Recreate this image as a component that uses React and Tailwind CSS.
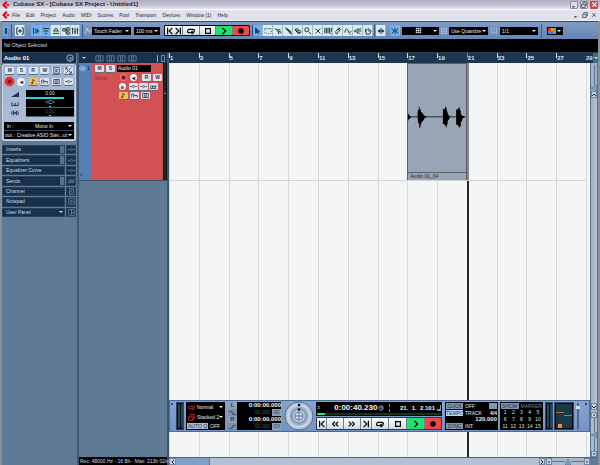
import clsx from 'clsx';

const MENUS = ['File', 'Edit', 'Project', 'Audio', 'MIDI', 'Scores', 'Pool', 'Transport', 'Devices', 'Window (1)', 'Help'];
const BARS = [1, 3, 5, 7, 9, 11, 13, 15, 17, 19, 21, 23, 25, 27];

// stroke icons, all on a 10x10 grid
const ICONS = {
  constrain: 'M3 1H1v8h2M7 1h2v8H7M3.5 5a1.5 1.5 0 1 0 3 0a1.5 1.5 0 1 0-3 0M5 4v2',
  inspector: 'M2 1v8M4 3h2M4 7h2M4 5h5M7 3v4',
  info: 'M1 2h8M2 5h6M4 8h2',
  overview: 'M1 8h8M2 6l2-4h2l2 4M3 5h4',
  pool: 'M1 2h3v3H1zM6 1h3v3H6zM6 6h3v3H6zM4 3h2M5 3v5h1',
  mixer: 'M2 1v8M5 1v8M8 1v8M1 3h2M4 6h2M7 4h2',
  auto: 'M1 9l3-6l3 4l2-4M3 2h2v2H3z',
  prev: 'M2 1v8M8 1L4 5l4 4',
  next: 'M8 1v8M2 1l4 4l-4 4',
  rewind: 'M5 2L2 5l3 3M9 2L6 5l3 3',
  forward: 'M1 2l3 3l-3 3M5 2l3 3l-3 3',
  cycle: 'M4 7H2.5Q0 7 1 4.500T4 3h3q3 0 2 2.500T7 7H6M7 5L5 7l2 2',
  stop: 'M2 2h6v6H2z',
  play: 'M3 1l4 4l-4 4',
  arrow: 'M2 1v7l2-2l2 3M2 1l5 5H4M3 3v4M4 4v2',
  range: 'M1 2h1M3 2h1M5 2h1M7 2h1M9 2v1M9 5v1M9 8H8M6 8H5M3 8H2M1 7V6M1 4V3',
  split: 'M1 2l5 3l3 3M4 4l4-1M5 5l1 4M7 6h2',
  glue: 'M2 1l4 5l3 3l-1-4zM4 3l4 3',
  erase: 'M1 3l3-1l5 4l-2 2H5zM2 4l4 1M4 6l4 1',
  zoom: 'M1 3.500a2.500 2.500 0 1 0 5 0a2.500 2.500 0 1 0-5 0M6 6l3 3',
  mute: 'M2 2l6 6M8 2L2 8',
  warp: 'M1 1v7M3 1v7M5 1v7M7 1v7M9 1v5M8 8h1v1',
  draw: 'M3 9l-1-3l4-5l2 2l-4 5zM5 3l2 1',
  line: 'M1 7q1-6 3-4t2 4t3-2M8 9h1',
  play2: 'M1 4h2l2-2v6L3 6H1zM6 3l3-1M6 5h3M6 7l2 2',
  color: 'M2 5l3-3l4 3l-2 4H3zM2 2v4M5 5h2',
  scroll: 'M5 1v8M1 5h8M3 3v4M7 3v4M2 4v2M8 4v2',
  snap: 'M5 1v8M1 2l3 3l-3 3M9 2L6 5l3 3',
  grid: 'M1 2h8M1 5h8M1 8h8M2 1v8M5 1v8M8 1v8',
  quantize: 'M2 1v8M8 1v8M5 5v4M3 7h4M4 2h2',
  lanes: 'M1 2h8v6H1zM4 2v6M6 2v6',
  env: 'M1 8V3h3v2h5v3M4 5v3',
  insert: 'M0 5h2.500M7.500 5H10M3 5l2-2l2 2l-2 2z',
  sends: 'M0 7l2-3h2l-1 3l3-3h2l-1 3l2-3M0 8h9',
  fit: 'M1 1l8 8M9 1L1 9M1 4V1h3M9 6v3H6',
  note: 'M4 8V2l3 2M4 8H2V7h2',
  input: 'M1 1h8v8H1zM4 3l3 2l-3 2z',
  out: 'M1 3v4M3 2v6M4 5a1 1 0 1 0 2 0a1 1 0 1 0-2 0M7 2v6M9 3v4',
  pan: 'M1 3v4h8V3M4 6l1-2l1 2',
  panel: 'M1 1h8v8H1zM5 1v8M5 5h4',
  page: 'M2 1h6v8H2zM4 3h2M4 5h2M4 7h2',
  restore: 'M3 3V1h6v5H7M1 4h6v5H1z',
  close: 'M2 2l6 6M8 2L2 8',
  min: 'M2 8h4',
  wave: 'M1 4v2M3 1v8M5 3v4M7 1v8M9 4v2',
};

function Icon({ name, className = 'size-[8px]', w = 1.2 }) {
  return (
    <svg viewBox="0 0 10 10" fill="none" stroke="currentColor" strokeWidth={w} className={clsx('shrink-0', className)} aria-hidden="true">
      {name === 'record' ? <circle cx="5" cy="5" r="3.5" fill="currentColor" stroke="none" /> : <path d={ICONS[name]} />}
    </svg>
  );
}

function Caret({ className }) {
  return (
    <svg viewBox="0 0 4 2" fill="currentColor" className={clsx('h-[2px] w-[4px] shrink-0', className)} aria-hidden="true">
      <path d="M0 0h4L2 2z" />
    </svg>
  );
}

function Logo() {
  return (
    <svg viewBox="0 0 10 10" className="size-[8px] shrink-0" aria-hidden="true">
      <path d="M5 0l2 2l-3 3l3 3l-2 2L0 5z" fill="#d40f20" />
      <path d="M7.500 3l2 2l-2 2l-2-2z" fill="#d40f20" />
    </svg>
  );
}

function Select({ label, value, className, children }) {
  return (
    <span className={clsx('relative flex h-[8px] items-center bg-black text-[#e6ebf2]', className)}>
      {children}
      <select aria-label={label} defaultValue={value} className="h-full w-full min-w-0 appearance-none bg-transparent pl-[2px] text-[5px] leading-[8px] outline-none">
        <option>{value}</option>
      </select>
      <Caret className="pointer-events-none absolute right-[2px]" />
    </span>
  );
}

function ToolButton({ icon, label, on, className = 'w-[10px]' }) {
  return (
    <button aria-label={label || icon} className={clsx('flex h-[11px] items-center justify-center border-r border-[#9db9c9] text-[#1c2f3d]', on ? 'bg-[#6bb0f4]' : 'bg-[#d9edf0]', className)}>
      <Icon name={icon} />
    </button>
  );
}

function TransportButton({ icon, className, tone = 'bg-gradient-to-b from-white to-[#cfdbe4]', h = 'h-[9px]' }) {
  return (
    <button aria-label={icon} className={clsx('flex items-center justify-center border-r border-[#6f8296] text-black last:border-r-0', h, tone, className)}>
      <Icon name={icon} w={1.5} />
    </button>
  );
}

// small white track buttons (M, S, R, W ...)
function Mini({ children, icon, label, yellow }) {
  return (
    <button
      aria-label={label || icon}
      className={clsx('flex h-[7px] w-[9px] items-center justify-center rounded-[1px] text-[5px] leading-[7px] font-bold text-[#2c3a4c] shadow-[0_1px_0_#5b6c86]', yellow ? 'bg-[#f6bd55]' : 'bg-[#dde6f0]')}
    >
      {icon ? <Icon name={icon} className="size-[7px]" /> : children}
    </button>
  );
}

function RecordButton({ big }) {
  return (
    <button aria-label="Record enable" className={clsx('flex items-center justify-center rounded-full border border-[#e88b8b] bg-[#d8303a] text-[#7a0c16]', big ? 'size-[11px]' : 'size-[7px]')}>
      <Icon name="record" className="size-[5px]" />
    </button>
  );
}

function MonitorButton({ children = '◂', className = 'size-[7px]' }) {
  return (
    <button aria-label="Monitor" className={clsx('flex items-center justify-center rounded-full bg-[#eef3f8] text-[6px] leading-none font-bold text-[#1c2a3c]', className)}>
      {children}
    </button>
  );
}

function TitleBar() {
  return (
    <header>
      <div className="flex h-[10px] items-center gap-[3px] border-b border-white bg-gradient-to-b from-[#b1afc3] via-[#c2c0d1] to-[#e4e2ec] pr-[2px] pl-[2px]">
        <Logo />
        <h1 className="text-[6px] leading-[9px] font-bold whitespace-nowrap text-[#26242e]">Cubase SX - [Cubase SX Project - Untitled1]</h1>
        <div className="ml-auto flex gap-[2px]">
          <button aria-label="Minimize" className="flex size-[8px] items-center justify-center rounded-[1px] border border-[#8a889e] bg-[#dddce8] text-[#333]"><Icon name="min" className="size-[6px]" w={2} /></button>
          <button aria-label="Restore" className="flex size-[8px] items-center justify-center rounded-[1px] border border-[#8a889e] bg-[#dddce8] text-[#333]"><Icon name="restore" className="size-[6px]" /></button>
          <button aria-label="Close" className="flex size-[8px] items-center justify-center rounded-[1px] bg-[#d8443c] text-white"><Icon name="close" className="size-[7px]" w={1.8} /></button>
        </div>
      </div>
      <div className="flex h-[11px] items-center border-b border-[#f7f8fb] bg-[#dfe2ec] pr-[2px] pl-[2px] text-[5px] leading-[9px] text-[#2a2c34]">
        <Logo />
        <nav className="ml-[2px] flex gap-[6px]">
          {MENUS.map((m) => (
            <button key={m} className="whitespace-nowrap">{m}</button>
          ))}
        </nav>
        <div className="ml-auto flex gap-[3px] pr-px text-[#333]">
          <Icon name="min" className="size-[6px]" w={2} />
          <Icon name="restore" className="size-[6px]" />
          <Icon name="close" className="size-[6px]" />
        </div>
      </div>
    </header>
  );
}

const Sep = () => <span className="h-[14px] w-px shrink-0 bg-[#3f5d84]" />;

function Toolbar() {
  return (
    <div className="flex h-[18px] items-center overflow-hidden border-t border-[#33496a] bg-gradient-to-b from-[#7f9cc4] to-[#6585b3] pl-px">
      <button aria-label="Active" className="flex h-[10px] w-[5px] items-center justify-center rounded-[1px] bg-[#66a9ee]"><span className="h-[6px] w-[2px] bg-[#1c3c62]" /></button>
      <span className="w-[3px]" />
      <Sep />
      <div className="ml-[3px] flex"><ToolButton icon="constrain" /></div>
      <div className="ml-[6px] flex">
        <ToolButton icon="inspector" on />
        <ToolButton icon="info" on />
        <ToolButton icon="overview" />
        <ToolButton icon="pool" />
        <ToolButton icon="mixer" className="w-[9px]" />
      </div>
      <span className="w-[2px]" />
      <Sep />
      <Icon name="auto" className="ml-px size-[8px] text-[#b9cbe2]" />
      <Select label="Automation mode" value="Touch Fader" className="w-[39px]" />
      <Select label="Return time" value="100 ms" className="ml-[3px] w-[26px]" />
      <span className="w-[4px]" />
      <div className="flex rounded-[1px] border border-black">
        <button aria-label="Locate" className="flex h-[9px] w-[18px] items-center justify-center border-r border-[#6f8296] bg-gradient-to-b from-white to-[#cfdbe4]">
          <Icon name="prev" w={1.5} />
          <Icon name="next" w={1.5} />
        </button>
        <TransportButton icon="cycle" className="w-[17px]" />
        <TransportButton icon="stop" className="w-[16px]" />
        <TransportButton icon="play" className="w-[17px]" tone="bg-[#1fe070]" />
        <TransportButton icon="record" className="w-[16px]" tone="bg-[#f0474d]" />
      </div>
      <span className="w-[2px]" />
      <div className="flex border-l border-[#33496a]">
        {['arrow', 'range', 'split', 'glue', 'erase', 'zoom', 'mute', 'warp', 'draw', 'line', 'play2', 'color'].map((t, i) => (
          <ToolButton key={t} icon={t} on={i === 0} />
        ))}
      </div>
      <span className="w-px" />
      <Sep />
      <div className="ml-px flex"><ToolButton icon="scroll" label="Autoscroll" /></div>
      <div className="ml-[4px] flex"><ToolButton icon="snap" on /></div>
      <Select label="Grid mode" value="" className="ml-[2px] w-[37px]">
        <Icon name="grid" className="absolute left-[13px] size-[7px]" w={1} />
      </Select>
      <Icon name="grid" className="mx-px size-[8px] text-[#a9bedb]" w={1} />
      <Select label="Grid type" value="Use Quantize" className="w-[39px]" />
      <Icon name="quantize" className="mx-[2px] size-[8px] text-[#a9bedb]" w={1} />
      <Select label="Quantize" value="1/1" className="w-[38px]" />
      <span className="w-[3px]" />
      <Sep />
      <button aria-label="Colors" className="ml-[5px] flex h-[8px] w-[16px] shrink-0 items-center gap-px bg-black px-px text-white">
        <svg viewBox="0 0 8 6" className="h-[6px] w-[8px] shrink-0" aria-hidden="true">
          <path d="M0 0h3v3H0z" fill="#d33" />
          <path d="M3 0h2v3H3z" fill="#f90" />
          <path d="M5 0h3v3H5z" fill="#4c4" />
          <path d="M0 3h3v3H0z" fill="#48e" />
          <path d="M3 3h2v3H3z" fill="#a4c" />
          <path d="M5 3h3v3H5z" fill="#3bc" />
        </svg>
        <Caret />
      </button>
    </div>
  );
}

function Display({ icon, value, dim, level }) {
  return (
    <div className="flex h-[9px] items-center">
      <Icon name={icon} className="mx-auto size-[8px] text-[#23354c]" />
      <div className="h-full w-[48px] border-b border-[#4d6078] bg-black text-center">
        <span className={clsx('block text-[5px] leading-[7px]', dim ? 'text-[#4b5765]' : 'text-[#d5dfe9]')}>{value}</span>
        <span className={clsx('mx-auto block h-px bg-[#2fd0e2]', level)} />
      </div>
    </div>
  );
}

const SECTIONS = [
  { name: 'Inserts', icon: 'insert', slot: true },
  { name: 'Equalizers', icon: 'insert', slot: true },
  { name: 'Equalizer Curve', icon: 'insert' },
  { name: 'Sends', icon: 'sends', slot: true },
  { name: 'Channel', icon: 'page' },
  { name: 'Notepad', icon: 'input' },
  { name: 'User Panel', icon: 'panel', caret: true },
];

function Inspector() {
  return (
    <aside className="w-[76px] shrink-0 border-r border-[#40566f] bg-[#5f7a95] pr-px">
      <div className="flex h-[10px] items-center justify-between bg-[#1b3049] px-[2px] text-[6px] leading-[9px] font-bold text-white">
        <h2>Audio 01</h2>
        <svg viewBox="0 0 10 10" className="size-[8px]" fill="none" stroke="#6f9bc9" strokeWidth="1.500" aria-hidden="true">
          <circle cx="5" cy="5" r="3.800" />
          <path d="M3.500 5h3L5 7" />
        </svg>
      </div>
      <div className="mt-px flex flex-col rounded-[2px] border border-[#c3d2e6] bg-gradient-to-b from-[#9db4d3] to-[#b0bfd6] px-px">
        <div className="grid grid-cols-6 place-items-center py-[2px]">
          <Mini>M</Mini>
          <Mini>S</Mini>
          <Mini>R</Mini>
          <Mini>W</Mini>
          <Mini icon="input" />
          <Mini icon="fit" />
        </div>
        <div className="grid grid-cols-6 place-items-center">
          <RecordButton big />
          <MonitorButton className="size-[8px]" />
          <Mini icon="note" yellow />
          <Mini icon="env" />
          <Mini icon="lanes" />
          <Mini icon="insert" />
        </div>
        <div className="mt-[3px]">
          <div className="flex h-[9px] items-center">
            <svg viewBox="0 0 8 5" className="mx-auto h-[5px] w-[8px]" aria-hidden="true"><path d="M0 5h8V0z" fill="#23354c" /></svg>
            <div className="h-full w-[48px] bg-black text-center">
              <span className="block text-[5px] leading-[7px] text-[#d5dfe9]">0.00</span>
              <span className="mr-[10px] block h-[2px] bg-[#2fd0e2]" />
            </div>
          </div>
          <Display icon="pan" value="<C>" level="w-[2px]" />
          <Display icon="out" value="0.00" dim level="w-[2px]" />
        </div>
        <div className="mt-[5px] mb-px bg-black text-[5px] leading-[8px] text-[#e6ebf2]">
          <label className="flex items-center pl-[3px]">
            in :
            <Select label="Input" value="Mono In" className="ml-auto w-[41px]" />
          </label>
          <label className="flex items-center border-t border-[#31435c] pl-px">
            out :
            <Select label="Output" value="Creative ASIO Ster...ut" className="min-w-0 flex-1" />
          </label>
        </div>
      </div>
      <ul className="mt-[4px] grid h-[72px] grid-rows-7 gap-px text-[5px] leading-[9px] text-[#d3dde8]">
        {SECTIONS.map((s) => (
          <li key={s.name} className="flex gap-px">
            <button className="flex flex-1 items-center justify-between border border-[#27435f] bg-[#18304a] pl-[3px]">
              {s.name}
              {s.slot && <span className="h-full w-[4px] bg-[#56718d]" />}
              {s.caret && <Caret className="mr-px" />}
            </button>
            <button aria-label={s.name + ' on'} className="flex w-[10px] items-center justify-center border border-[#27435f] bg-[#18304a] text-[#68849f]">
              <Icon name={s.icon} className="size-[7px]" />
            </button>
          </li>
        ))}
      </ul>
    </aside>
  );
}

function TrackList() {
  return (
    <section className="flex w-[91px] shrink-0 flex-col border-r-2 border-l border-[#40566f] bg-[#5f7a95]">
      <div className="flex h-[10px] items-center gap-[2px] bg-[#1b3049] pr-[2px] pl-[3px] text-[#c6d4e2]">
        <Caret className="mr-[7px]" />
        {['a', 'b', 'c', 'd'].map((k) => <Icon key={k} name="lanes" className="size-[9px] text-[#5f7f9d]" w={1} />)}
        <span className="ml-auto h-[7px] w-px bg-[#bba775]" />
        <span className="ml-px h-[7px] w-[4px] border border-[#6d8ba8]" />
      </div>
      <div className="flex h-[118px] border-b border-[#3b5069]">
        <div className="flex w-[13px] flex-col justify-between bg-[#5580b5] pt-px text-[6px] leading-[8px] text-[#10233b]">
          <span className="flex items-center gap-px"><Icon name="wave" className="size-[7px] text-[#c7dcf2]" w={1} />1</span>
          <span className="pl-px">*</span>
        </div>
        <div className="flex-1 bg-[#d25154] pt-[2px] pl-[3px]">
          <div className="flex items-center gap-[2px]">
            <Mini>M</Mini>
            <Mini>S</Mini>
            <input aria-label="Track name" defaultValue="Audio 01" className="h-[7px] w-[34px] bg-black pl-px text-[5px] leading-[7px] text-[#eef2f6] outline-none" />
          </div>
          <div className="flex">
            <span className="w-[24px] pt-[2px] text-[5px] leading-[8px] text-[#8f2b30]">Mono</span>
            <div className="flex flex-col gap-[2px] pt-[2px]">
              <div className="flex gap-[2px]"><span className="flex w-[9px] justify-center"><RecordButton /></span><MonitorButton /><span className="w-px" /><Mini>R</Mini><Mini>W</Mini></div>
              <div className="flex gap-px"><span className="flex w-[9px]"><MonitorButton>e</MonitorButton></span><Mini icon="insert" /><Mini icon="insert" /><Mini icon="sends" /></div>
              <div className="flex gap-[2px]"><Mini icon="note" yellow /><Mini icon="env" /><Mini icon="lanes" /></div>
            </div>
          </div>
        </div>
        <div className="w-[4px] border-x border-[#0a1512] bg-[#1b2a26] pt-[30px]"><div className="h-px bg-[#d08a2a]" /></div>
      </div>
      <p className="mt-auto h-[8px] bg-black pl-px text-[5px] leading-[8px] whitespace-nowrap text-[#cfd8e2]">Rec: 48000 Hz - 16 Bit - Max: 213h 02m</p>
    </section>
  );
}

function Waveform() {
  return (
    <svg viewBox="0 0 61 24" preserveAspectRatio="none" className="h-[24px] w-full" fill="#000" aria-hidden="true">
      <path d="M0 11.600H61V12.300H0zM0 8l1 2l2 1.500v1L1 14l-1 2z" />
      <path d="M10 11L10.500 5l1 0V1l1 2v2l1-1v3l2 1l1 2l2 1l1 .8v.4l-2 1l-1 2l-2 2v1l-1 1l-.5 4l-1-1v-3l-1-1z" />
      <path d="M37 4h2l1-3l1 3v2l1 1v2l2 2l1 1l-1 1l-1 2l-1 1v3l-1 1v3l-1-2l-2-2h-1z" />
      <path d="M51 5l1-1l1 1V2l1 2l1-2v3l1 1v3l2 2l2 .8v.4l-2 1l-1 3l-1 1v3l-1 2h-1l-1-2l-2-1z" />
    </svg>
  );
}

function Marks() {
  return (
    <div className="grid flex-1 grid-cols-14">
      {BARS.map((b) => <span key={b} className="border-l border-[#d5d9dd]" />)}
    </div>
  );
}

function Arrow({ d, label, className }) {
  return (
    <button aria-label={label} className={clsx('flex shrink-0 items-center justify-center border border-[#71879f] bg-[#c4d2e1] text-[#1c2c40]', className)}>
      <svg viewBox="0 0 4 4" className="size-[4px]" fill="none" stroke="currentColor" aria-hidden="true"><path d={d} /></svg>
    </button>
  );
}

function VerticalBar() {
  return (
    <div className="flex w-[8px] shrink-0 flex-col border-x border-[#5b728f] bg-[#a9bacd]">
      <div className="flex h-[28px] flex-col items-center bg-[#9fb2c9]">
        <span className="mt-[2px] w-px flex-1 bg-[#5d7591]" />
        <svg viewBox="0 0 6 6" className="size-[6px]" aria-hidden="true"><path d="M6 0v6L0 3z" fill="#7fa2ba" stroke="#4e657f" strokeWidth=".6" /></svg>
      </div>
      <Arrow label="Scroll up" d="M0 3l2-2l2 2" className="h-[7px]" />
      <div className="flex-1 bg-gradient-to-r from-[#9cb0c8] to-[#b5c3d4]" />
      <Arrow label="Scroll down" d="M0 1l2 2l2-2" className="h-[7px]" />
      <div className="mt-[2px] flex h-[45px] flex-col items-center bg-[#a9bacd]">
        <Arrow label="Zoom out" d="M1 2h2" className="h-[6px] w-full" />
        <span className="w-px flex-1 bg-[#5d7591]" />
        <svg viewBox="0 0 6 6" className="size-[6px]" aria-hidden="true"><path d="M6 0v6L0 3z" fill="#7fa2ba" stroke="#4e657f" strokeWidth=".6" /></svg>
        <span className="w-px flex-1 bg-[#5d7591]" />
        <Arrow label="Zoom in" d="M1 2h2" className="h-[6px] w-full" />
      </div>
    </div>
  );
}

function HorizontalBar() {
  return (
    <div className="flex h-[8px] shrink-0 border-t border-[#4e657f] bg-[#a9bacd]">
      <Arrow label="Scroll left" d="M3 0l-2 2l2 2" className="w-[7px]" />
      <div className="w-[34px] border-r border-[#5b728f] bg-[#7f9fc9]" />
      <div className="flex-1 bg-[#b3c2d2]" />
      <Arrow label="Scroll right" d="M1 0l2 2l-2 2" className="w-[6px]" />
      <div className="ml-px flex w-[44px] items-center">
        <Arrow label="Zoom out" d="M1 2h2" className="h-full w-[6px]" />
        <span className="h-px flex-1 bg-[#5d7591]" />
        <svg viewBox="0 0 6 6" className="size-[6px]" aria-hidden="true"><path d="M3 0l3 6H0z" fill="#7fa2ba" stroke="#4e657f" strokeWidth=".6" /></svg>
        <span className="h-px flex-1 bg-[#5d7591]" />
        <Arrow label="Zoom in" d="M1 2h2" className="h-full w-[6px]" />
      </div>
      <span className="w-[8px] bg-[#5f7a95]" />
    </div>
  );
}

function Meter() {
  return (
    <div className="flex w-[8px] justify-center gap-px border border-[#2d4768] bg-black py-px">
      <span className="w-[2px] bg-[#1b4a58]" />
      <span className="w-[2px] bg-[#1b4a58]" />
    </div>
  );
}

function Locator({ name, icon, flag }) {
  return (
    <div className="flex h-[14px]">
      <div className="w-[9px] text-center text-[6px] leading-[7px] font-bold text-[#26394f]">
        <span className="block h-[7px] bg-[#8ea0b5]">{name}</span>
        <span className="flex h-[7px] items-center justify-center bg-[#7b8fa8]">
          <svg viewBox="0 0 8 4" className="h-[4px] w-[7px]" fill="none" stroke="currentColor" aria-hidden="true"><path d={icon} /></svg>
        </span>
      </div>
      <div className="flex-1 bg-black text-right text-[6px] leading-[7px] text-[#f2f5f8]">
        <span className="block font-bold">0:00:00.000</span>
        <span className="flex justify-end gap-[2px] text-[5px] text-[#4d5660]">00.000<span className="w-[9px] bg-[#8ea0b5] text-center leading-[6px] text-[#26394f]">{flag}</span></span>
      </div>
    </div>
  );
}

function JogWheel() {
  return (
    <svg viewBox="0 0 30 30" className="size-[30px] shrink-0" aria-hidden="true">
      <circle cx="15" cy="15" r="14" fill="#b9c8da" stroke="#50678a" />
      <circle cx="15" cy="15" r="10.500" fill="#9db0c9" stroke="#dfe8f2" />
      <circle cx="15" cy="15" r="7" fill="#b4c5d9" stroke="#6c84a4" />
      <circle cx="15" cy="15" r="4" fill="#d5e0ec" stroke="#6c84a4" />
      <path d="M15 11v8M11 15h8" stroke="#5d7594" />
      <circle cx="15" cy="4" r="1.300" />
      <circle cx="15" cy="8.500" r="1.300" />
    </svg>
  );
}

function TransportPanel() {
  return (
    <div className="absolute bottom-[33px] left-0 flex h-[32px] w-[421px] items-stretch border border-[#4d6b98] bg-gradient-to-b from-[#86a4d2] to-[#7393c4] py-px">
      <span className="w-[6px] pt-px pl-px"><span className="block size-[2px] bg-[#2c456c]" /></span>
      <Meter />
      <div className="ml-[2px] flex w-[39px] flex-col justify-between bg-black py-px">
        <div className="flex items-center pl-[2px]">
          <Icon name="cycle" className="size-[7px] text-[#e0343c]" />
          <Select label="Record mode" value="Normal" className="min-w-0 flex-1" />
        </div>
        <div className="flex items-center pl-[2px]">
          <Icon name="restore" className="size-[7px] text-[#e0343c]" />
          <Select label="Cycle mode" value="Stacked 2" className="min-w-0 flex-1" />
        </div>
        <div className="flex gap-[2px] pl-px text-[5px] leading-[6px] text-[#e6ebf2]">
          <button className="bg-[#a9bbcd] px-px text-[#26394f]">AUTO Q</button>OFF
        </div>
      </div>
      <div className="ml-[3px] flex w-[53px] flex-col">
        <Locator name="L" icon="M0 0h3l2 4h3" flag="I/D" />
        <Locator name="R" icon="M0 4h3l2-4h3" flag="O/I" />
      </div>
      <div className="ml-[2px] flex w-[31px] items-center justify-center"><JogWheel /></div>
      <div className="ml-[2px] flex w-[126px] flex-col">
        <div className="h-[14px] bg-black px-px text-[#f2f5f8]">
          <div className="flex h-[11px] items-center font-bold">
            <span className="text-[6px] leading-[5px] text-[#8fb2c4]">±</span>
            <span className="ml-[14px] text-[8px] leading-[10px]">0:00:40.230</span>
            <svg viewBox="0 0 6 6" className="ml-px size-[6px]" fill="none" stroke="#86aac0" aria-hidden="true"><circle cx="3" cy="3" r="2.200" /><path d="M3 1.500V3h1.500" /></svg>
            <span className="ml-[5px] h-[8px] border-l border-dashed border-[#718394]" />
            <span className="ml-auto text-[6px] leading-[10px]">21. &nbsp;1. &nbsp;2.101</span>
            <svg viewBox="0 0 4 6" className="ml-[2px] h-[6px] w-[4px]" fill="#8796a6" aria-hidden="true"><path d="M3 0h1v6H0V4h3z" /></svg>
          </div>
          <div className="h-[2px] bg-[#123326]"><div className="h-full w-[8px] bg-[#25e27a]" /></div>
        </div>
        <div className="mt-px flex border border-[#26394f]">
          <TransportButton icon="prev" h="h-[11px]" className="w-[10px]" />
          <TransportButton icon="rewind" h="h-[11px]" className="w-[17px]" />
          <TransportButton icon="forward" h="h-[11px]" className="w-[17px]" />
          <TransportButton icon="next" h="h-[11px]" className="w-[11px]" />
          <TransportButton icon="cycle" h="h-[11px]" className="w-[17px]" />
          <TransportButton icon="stop" h="h-[11px]" className="w-[18px]" />
          <TransportButton icon="play" h="h-[11px]" className="w-[18px]" tone="bg-[#1fe070]" />
          <TransportButton icon="record" h="h-[11px]" className="w-[16px]" tone="bg-[#f0474d]" />
        </div>
      </div>
      <div className="ml-[3px] flex w-[53px] flex-col justify-between bg-black p-px text-[5px] leading-[6px] text-[#e6ebf2]">
        <div className="flex gap-[2px]"><button className="w-[17px] bg-[#8496ab] text-[#1f3046]">CLICK</button>OFF<span className="ml-auto w-[8px] bg-[#8496ab]" /></div>
        <div className="flex gap-[2px]"><button className="w-[17px] bg-[#b7d6ff] text-[#1f3046]">TEMPO</button>TRACK<span className="ml-auto font-bold">4/4</span></div>
        <div className="text-right text-[6px] font-bold">120.000</div>
        <div className="flex gap-[2px]"><button className="w-[17px] bg-[#8496ab] text-[#1f3046]">SYNC</button>INT.</div>
      </div>
      <div className="ml-[2px] flex w-[43px] flex-col bg-black p-px text-[5px] leading-[6px] text-[#d9e2ec]">
        <div className="flex justify-between"><button className="bg-[#8496ab] px-px text-[#1f3046]">SHOW</button><span className="text-[#6f8399]">MARKER</span></div>
        <div className="grid flex-1 grid-cols-5 place-items-center">
          {Array.from({ length: 15 }, (_, i) => <button key={i}>{i + 1}</button>)}
        </div>
      </div>
      <span className="w-[2px]" />
      <Meter />
      <div className="ml-px flex w-[20px] justify-between border border-[#2d4768] bg-black p-px">
        <div className="flex w-[8px] flex-col justify-between bg-[#173a48] pt-[8px]"><span className="h-px bg-[#c86a2a]" /><span className="mx-[2px] h-[4px] bg-[#ff8a1c]" /></div>
        <div className="w-[8px] bg-[#173a48] pt-[11px]"><span className="block h-px bg-[#c86a2a]" /></div>
      </div>
      <div className="flex w-[7px] justify-center py-px"><span className="w-[2px] bg-[#4c658b] pt-[3px]"><span className="-ml-px block h-[3px] w-[4px] bg-[#d6e2ef]" /></span></div>
      <span className="ml-auto pt-px pr-[2px]"><span className="block size-[2px] bg-[#2c456c]" /></span>
    </div>
  );
}

function Timeline() {
  return (
    <section className="relative flex min-w-0 flex-1 flex-col">
      <div className="flex h-[10px] bg-[#1f3650] text-[6px] leading-[10px] font-bold text-[#dbe4ed]">
        <div className="grid flex-1 grid-cols-14">
          {BARS.map((b) => (
            <span key={b} className="flex items-start">
              <span className={clsx('h-[5px] w-px', b === 21 ? 'bg-[#e06a5a]' : 'bg-[#dbe4ed]')} />
              {b}
            </span>
          ))}
        </div>
        <span className="w-[7px]">29</span>
        <span className="flex w-[5px] items-center justify-center bg-[#2a7286]"><Caret /></span>
      </div>
      <div className="flex flex-1">
        <div className="relative flex flex-1 flex-col bg-[#f4f6f6]">
          <div className="flex flex-1">
            <Marks />
            <span className="w-[4px] border-l border-[#d5d9dd]" />
          </div>
          {/* event lane lies over the bar lines */}
          <div className="absolute inset-0 flex">
            <div className="grid flex-1 grid-cols-14 grid-rows-[118px_1fr]">
              <div className="col-span-2 col-start-9 row-start-1 flex flex-col border border-[#5b6066] bg-[#98a5b5]">
                <div className="flex flex-1 items-center pb-[2px]"><Waveform /></div>
                <p className="h-[8px] border-t border-[#5b6066] pl-[2px] text-[5px] leading-[7px] text-[#1c2530]">Audio 01_04</p>
              </div>
              <span className="col-start-11 row-start-1 w-[2px] bg-[#8d8582]" />
              <span className="col-start-11 row-start-2 w-[2px] bg-[#2a2628]" />
              <span className="col-span-full col-start-1 row-start-1 self-end border-b border-[#d0d3d8]" />
            </div>
            <span className="w-[4px]" />
          </div>
        </div>
        <VerticalBar />
      </div>
      <HorizontalBar />
      <TransportPanel />
    </section>
  );
}

export default function App() {
  return (
    <div className="flex min-h-screen flex-col bg-[#dfe2ec] font-['Liberation_Sans',Arial,sans-serif]">
      <TitleBar />
      <div className="flex flex-1 flex-col border-r-2 border-l-2 border-[#8b9099]">
        <Toolbar />
        <p className="h-[14px] border-b border-[#2a3c52] bg-black pl-[2px] text-[5px] leading-[12px] text-[#d6dce3]">No Object Selected</p>
        <main className="flex flex-1">
          <Inspector />
          <TrackList />
          <Timeline />
        </main>
      </div>
    </div>
  );
}
